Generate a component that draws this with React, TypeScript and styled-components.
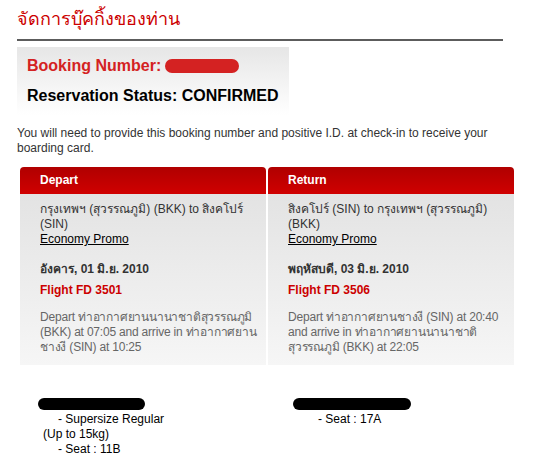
import React from "react";
import styled, { createGlobalStyle } from "styled-components";

const Global = createGlobalStyle`
  html, body { margin: 0; padding: 0; background: #fff; }
  body { font-family: "Liberation Sans", Tahoma, "Noto Sans", sans-serif; font-size: 12px; color: #333; }
`;

const Page = styled.div`
  padding: 8px 17px 0 17px;
  width: 520px;
  box-sizing: border-box;
`;

const Title = styled.h1`
  margin: 0;
  font-size: 18px;
  line-height: 22px;
  font-weight: normal;
  color: #cc0000;
`;

const Rule = styled.div`
  margin-top: 9px;
  width: 486px;
  height: 2px;
  background: #5c5c5c;
`;

const BookingBox = styled.div`
  margin-top: 6px;
  width: 272px;
  box-sizing: border-box;
  padding: 9px 10px;
  background: linear-gradient(#e6e6e6, #ffffff);
  display: flex;
  flex-direction: column;
  gap: 10px;
`;

const BoxLine = styled.div<{ $red?: boolean }>`
  font-size: 16px;
  line-height: 20px;
  font-weight: bold;
  color: ${(p) => (p.$red ? "#d42222" : "#000")};
  display: flex;
  align-items: center;
  gap: 4px;
`;

const Redact = styled.span<{ $w: number; $color: string; $shift?: number }>`
  display: block;
  width: ${(p) => p.$w}px;
  height: ${(p) => (p.$color === "#000" ? 12 : 14)}px;
  border-radius: 8px;
  background: ${(p) => p.$color};
  margin-left: ${(p) => p.$shift ?? 0}px;
`;

const Note = styled.p`
  margin: 11px 0 0 0;
  line-height: 15px;
  color: #333;
`;

const Cards = styled.div`
  margin: 11px 0 0 3px;
  display: grid;
  grid-template-columns: 246px 246px;
  column-gap: 2px;
`;

const Card = styled.div`
  display: flex;
  flex-direction: column;
`;

const CardHead = styled.div`
  height: 27px;
  line-height: 27px;
  padding-left: 20px;
  border-radius: 4px 4px 0 0;
  background: linear-gradient(#b00000, #d00000);
  color: #fff;
  font-weight: bold;
  font-size: 12px;
`;

const CardBody = styled.div`
  flex: 1;
  padding: 8px 4px 10px 20px;
  background: linear-gradient(#e3e3e3, #f6f6f6);
  line-height: 15px;
  color: #333;
`;

const TextLine = styled.div`
  white-space: nowrap;
`;

const Fare = styled.span`
  color: #000;
  text-decoration: underline;
`;

const DateLine = styled.div`
  margin-top: 15px;
  font-weight: bold;
  color: #333;
  white-space: nowrap;
`;

const Flight = styled.div`
  margin-top: 6px;
  font-weight: bold;
  color: #cc0000;
`;

const Desc = styled.div`
  margin-top: 12px;
  color: #666;
  letter-spacing: -0.2px;
`;

const Passengers = styled.div`
  margin-top: 33px;
  padding-left: 26px;
  display: grid;
  grid-template-columns: 260px 1fr;
  color: #000;
  line-height: 15px;
`;

const PaxCol = styled.div`
  display: flex;
  flex-direction: column;
`;

const PaxLine = styled.div<{ $indent?: number }>`
  padding-left: ${(p) => p.$indent ?? 0}px;
  white-space: nowrap;
`;

const PaxName = styled.div`
  height: 14px;
  display: flex;
  align-items: flex-start;
`;

const trips = [
  {
    head: "Depart",
    route: ["กรุงเทพฯ (สุวรรณภูมิ) (BKK) to สิงคโปร์", "(SIN)"],
    date: "อังคาร, 01 มิ.ย. 2010",
    flight: "Flight FD 3501",
    desc: [
      "Depart ท่าอากาศยานนานาชาติสุวรรณภูมิ",
      "(BKK) at 07:05 and arrive in ท่าอากาศยาน",
      "ชางงี (SIN) at 10:25",
    ],
  },
  {
    head: "Return",
    route: ["สิงคโปร์ (SIN) to กรุงเทพฯ (สุวรรณภูมิ)", "(BKK)"],
    date: "พฤหัสบดี, 03 มิ.ย. 2010",
    flight: "Flight FD 3506",
    desc: [
      "Depart ท่าอากาศยานชางงี (SIN) at 20:40",
      "and arrive in ท่าอากาศยานนานาชาติ",
      "สุวรรณภูมิ (BKK) at 22:05",
    ],
  },
];

export default function App() {
  return (
    <Page>
      <Global />
      <Title>จัดการบุ๊คกิ้งของท่าน</Title>
      <Rule />
      <BookingBox>
        <BoxLine $red>
          Booking Number: <Redact $w={74} $color="#d42222" />
        </BoxLine>
        <BoxLine>Reservation Status: CONFIRMED</BoxLine>
      </BookingBox>
      <Note>
        You will need to provide this booking number and positive I.D. at check-in to receive your
        boarding card.
      </Note>
      <Cards>
        {trips.map((t) => (
          <Card key={t.head}>
            <CardHead>{t.head}</CardHead>
            <CardBody>
              {t.route.map((r) => (
                <TextLine key={r}>{r}</TextLine>
              ))}
              <Fare>Economy Promo</Fare>
              <DateLine>{t.date}</DateLine>
              <Flight>{t.flight}</Flight>
              <Desc>
                {t.desc.map((d) => (
                  <TextLine key={d}>{d}</TextLine>
                ))}
              </Desc>
            </CardBody>
          </Card>
        ))}
      </Cards>
      <Passengers>
        <PaxCol>
          <PaxName>
            <Redact $w={107} $color="#000" $shift={-5} />
          </PaxName>
          <PaxLine $indent={15}>- Supersize Regular</PaxLine>
          <PaxLine>(Up to 15kg)</PaxLine>
          <PaxLine $indent={15}>- Seat : 11B</PaxLine>
        </PaxCol>
        <PaxCol>
          <PaxName>
            <Redact $w={118} $color="#000" $shift={-10} />
          </PaxName>
          <PaxLine $indent={15}>- Seat : 17A</PaxLine>
        </PaxCol>
      </Passengers>
    </Page>
  );
}
